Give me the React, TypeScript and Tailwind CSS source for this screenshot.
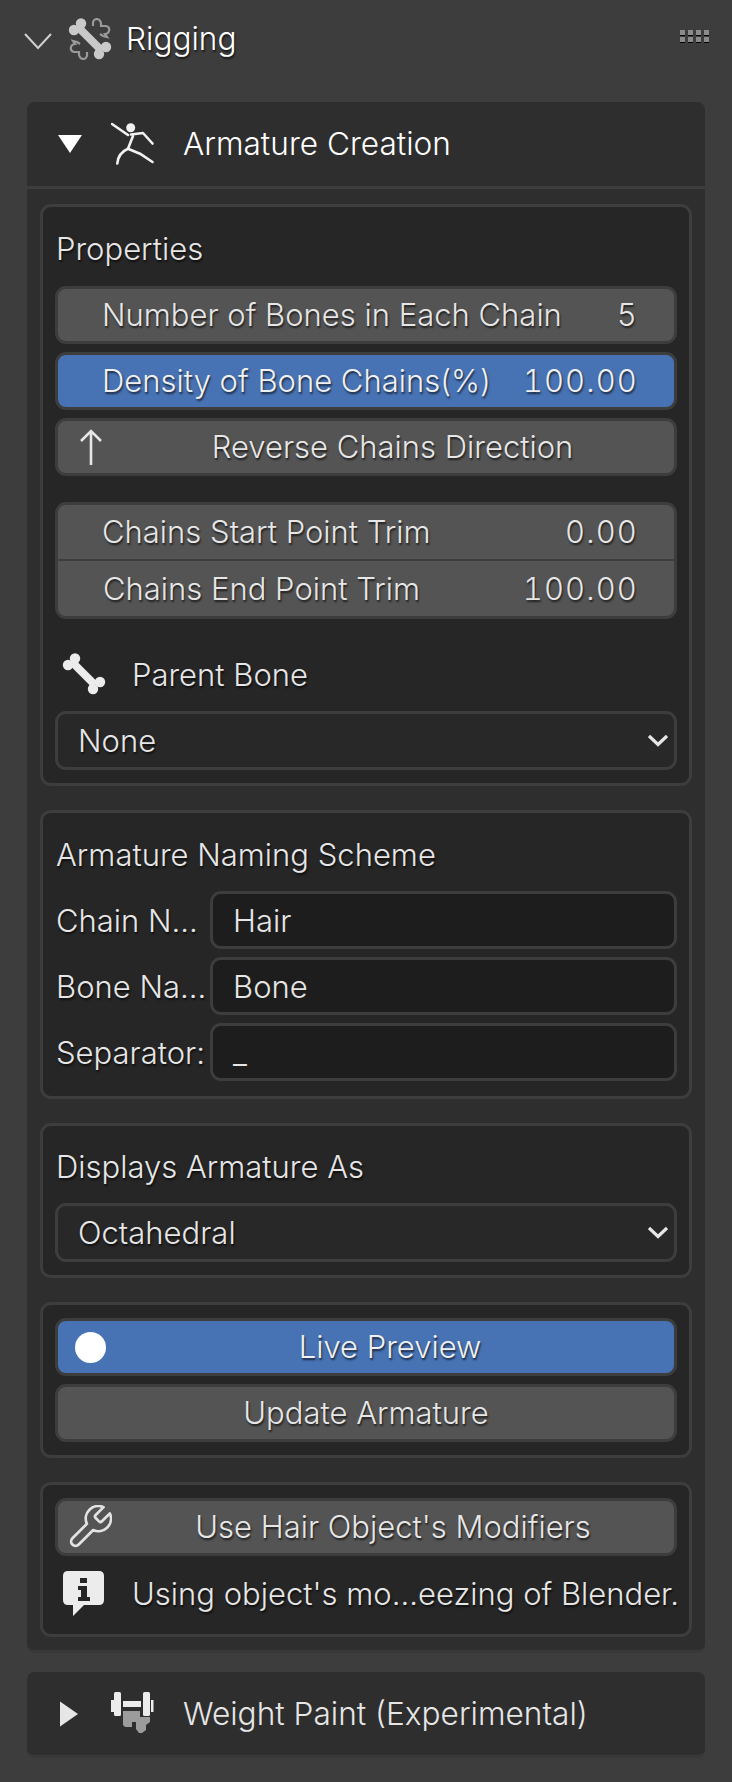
import React from "react";

const shadow = "[text-shadow:1px_2px_2px_rgba(0,0,0,0.65)]";

function Chevron() {
  return (
    <svg width="20" height="14" viewBox="0 0 20 14" className="shrink-0">
      <path d="M1 2 L10 10.5 L19 2" fill="none" stroke="#e6e6e6" strokeWidth="3.2" />
    </svg>
  );
}

function Box({ children, className = "" }: { children: React.ReactNode; className?: string }) {
  return (
    <div className={`rounded-[11px] border-[3px] border-[#3d3d3d] bg-[#262626] px-[12px] ${className}`}>{children}</div>
  );
}

function Label({ children, className = "" }: { children: React.ReactNode; className?: string }) {
  return <div className={`text-[31px] leading-[36px] text-[#e6e6e6] ${shadow} ${className}`}>{children}</div>;
}

function Field({ label, value, blue, className = "" }: { label: string; value: string; blue?: boolean; className?: string }) {
  return (
    <div
      className={`flex h-[58px] items-center justify-between rounded-[11px] border-[3px] border-[#3d3d3d] pl-[44px] pr-[36px] text-[31px] ${shadow} ${
        blue ? "bg-[#4772b3] text-[#f0f0f0]" : "bg-[#545454] text-[#e6e6e6]"
      } ${className}`}
    >
      <span>{label}</span>
      <span className="tabular-nums tracking-[1.1px]">{value}</span>
    </div>
  );
}

function Select({ value }: { value: string }) {
  return (
    <div className={`flex h-[59px] items-center justify-between rounded-[11px] border-[3px] border-[#3d3d3d] bg-[#282828] pl-[20px] pr-[6px] text-[31px] text-[#e6e6e6] ${shadow}`}>
      <span className="pt-[2px]">{value}</span>
      <Chevron />
    </div>
  );
}

function TextRow({ label, value }: { label: string; value: string }) {
  return (
    <div className="flex h-[58px] items-center">
      <div className={`w-[155px] shrink-0 whitespace-nowrap pl-[1px] pt-[2px] text-[31px] text-[#e6e6e6] ${shadow}`}>{label}</div>
      <div className="flex h-[58px] flex-1 items-center rounded-[11px] border-[3px] border-[#3d3d3d] bg-[#1d1d1d] pl-[20px] pt-[2px] text-[31px] text-[#e6e6e6]">
        {value}
      </div>
    </div>
  );
}

function BoneIcon() {
  return (
    <svg width="44" height="42" viewBox="0 0 44 42" className="shrink-0">
      <path d="M11 10 L33 32" stroke="#ececec" strokeWidth="8" />
      <circle cx="6" cy="12" r="5.2" fill="#ececec" />
      <circle cx="13" cy="5.5" r="5.2" fill="#ececec" />
      <circle cx="31" cy="36" r="5.2" fill="#ececec" />
      <circle cx="38" cy="29" r="5.2" fill="#ececec" />
    </svg>
  );
}

function RigIcon() {
  return (
    <svg width="44" height="42" viewBox="0 0 44 42" className="shrink-0">
      <path d="M11 10 L33 32" stroke="#c9c9c9" strokeWidth="8" />
      <circle cx="6" cy="12" r="5.2" fill="#c9c9c9" />
      <circle cx="13" cy="5.5" r="5.2" fill="#c9c9c9" />
      <circle cx="31" cy="36" r="5.2" fill="#c9c9c9" />
      <circle cx="38" cy="29" r="5.2" fill="#c9c9c9" />
      <path d="M25 8 V4 Q26 1 29 1 Q33 2 33 6 V8 H38 Q42 9 41 13 Q40 16 37 16 L39 19 L35 18 L32 16" fill="none" stroke="#9a9a9a" strokeWidth="2.2" />
      <path d="M19 34 V38 Q18 41 15 41 Q11 40 11 36 V34 H6 Q2 33 3 29 Q4 26 7 26 L5 23 L9 24 L12 26" fill="none" stroke="#9a9a9a" strokeWidth="2.2" />
    </svg>
  );
}

function RunIcon() {
  return (
    <svg width="44" height="44" viewBox="0 0 44 44" className="shrink-0">
      <circle cx="19.7" cy="5.7" r="4.5" fill="#f2f2f2" />
      <g fill="none" stroke="#f2f2f2" strokeWidth="2.6" strokeLinecap="round" strokeLinejoin="round">
        <path d="M1 2 L17 13" />
        <path d="M20 12.5 L32 11 L41.5 21.5" />
        <path d="M22 14 L17 26.7 L29 31.7 L41.5 40" />
        <path d="M17 26.7 Q7 31 6.3 41.5" />
      </g>
    </svg>
  );
}

function WeightIcon() {
  return (
    <svg width="44" height="44" viewBox="0 0 44 44" className="shrink-0">
      <path d="M12 19 H29 V25 H39 V30 L35 33 V38 L31 41 H28 L25 37 V30 H21 V35 H14 L12 33 Z" fill="#9c9c9c" />
      <g fill="#ececec">
        <rect x="0" y="8" width="3" height="12" />
        <rect x="3" y="0" width="7" height="24" rx="1.5" />
        <rect x="12" y="9" width="18" height="6" />
        <rect x="32" y="0" width="7" height="24" rx="1.5" />
        <rect x="40" y="8" width="2.5" height="12" />
      </g>
    </svg>
  );
}

function WrenchIcon() {
  return (
    <svg width="44" height="44" viewBox="1.5 1.5 21 21" className="shrink-0">
      <path
        d="M14.7 6.3a1 1 0 0 0 0 1.4l1.6 1.6a1 1 0 0 0 1.4 0l3.77-3.77a6 6 0 0 1-7.94 7.94l-6.91 6.91a2.12 2.12 0 0 1-3-3l6.91-6.91a6 6 0 0 1 7.94-7.94l-3.76 3.76z"
        fill="none"
        stroke="#e2e2e2"
        strokeWidth="1.3"
        strokeLinejoin="round"
      />
    </svg>
  );
}

function InfoIcon() {
  return (
    <svg width="44" height="46" viewBox="0 0 44 46" className="shrink-0">
      <path fillRule="evenodd" fill="#ececec" d="M6 0 H37 Q42 0 42 5 V29 Q42 34 37 34 H22 L11 45 L11 34 H6 Q1 34 1 29 V5 Q1 0 6 0 Z M18 7 V12 H25 V7 Z M16 15 V19 H19 V26 H16 V30 H28 V26 H25 V15 Z" />
    </svg>
  );
}

function Grip() {
  return (
    <div className="mb-[5px] grid grid-cols-4 gap-x-[3px] gap-y-[1px]">
      {Array.from({ length: 8 }).map((_, i) => (
        <div key={i} className="h-[6px] w-[5px] border-b-[1px] border-black bg-[#8a8a8a]" />
      ))}
    </div>
  );
}

export default function App() {
  return (
    <div className="h-[1782px] w-[732px] overflow-hidden bg-[#3d3d3d] font-['Inter',sans-serif] [font-weight:350]">
      <div className="flex h-[78px] items-center pl-[24px] pr-[23px]">
        <svg width="28" height="17" viewBox="0 0 28 17" className="mt-[5px] shrink-0">
          <path d="M1 1 L14 15 L27 1" fill="none" stroke="#d0d0d0" strokeWidth="2" />
        </svg>
        <div className="ml-[16px]">
          <RigIcon />
        </div>
        <div className={`ml-[14px] flex-1 text-[31.6px] text-white ${shadow}`}>Rigging</div>
        <Grip />
      </div>

      <div className="mx-[27px] mt-[24px] rounded-[8px] border-b-[3px] border-[#383838] bg-[#2e2e2e] pb-[13px]">
        <div className="flex h-[87px] items-center border-b-[3px] border-[#3d3d3d] pl-[30px]">
          <svg width="26" height="20" viewBox="0 0 26 20" className="shrink-0">
            <path d="M1 1 H25 L13 19 Z" fill="#ffffff" />
          </svg>
          <div className="ml-[28px]">
            <RunIcon />
          </div>
          <div className="ml-[28px] text-[31.6px] text-white">Armature Creation</div>
        </div>

        <div className="mx-[13px] mt-[15px] flex flex-col gap-[24px]">
          <Box className="pb-[13px] pt-[24px]">
            <Label className="mb-[19px] pl-[1px]">Properties</Label>
            <div className="flex flex-col gap-[8px]">
              <Field label="Number of Bones in Each Chain" value="5" />
              <Field label="Density of Bone Chains(%)" value="100.00" blue />
              <div className={`flex h-[58px] items-center rounded-[11px] border-[3px] border-[#3d3d3d] bg-[#545454] text-[31px] text-[#e6e6e6] ${shadow}`}>
                <svg width="26" height="38" viewBox="0 0 26 38" className="ml-[20px] shrink-0">
                  <path d="M13 37 V3 M3 13 L13 3 L23 13" fill="none" stroke="#e6e6e6" strokeWidth="2.6" />
                </svg>
                <span className="flex-1 pl-[7px] text-center">Reverse Chains Direction</span>
              </div>
            </div>
            <div className="mt-[26px] flex flex-col">
              <Field label="Chains Start Point Trim" value="0.00" className="h-[59px] rounded-b-none border-b-[2px]" />
              <Field label="Chains End Point Trim" value="100.00" className="rounded-t-none border-t-0 pl-[45px] pt-[1px]" />
            </div>
            <div className="mb-[13px] mt-[31px] flex h-[48px] items-center pl-[7px]">
              <BoneIcon />
              <Label className="ml-[26px] pt-[2px]">Parent Bone</Label>
            </div>
            <Select value="None" />
          </Box>

          <Box className="pb-[15px] pt-[23px]">
            <Label className="mb-[19px] h-[36px] pl-[1px] pt-[1px]">Armature Naming Scheme</Label>
            <div className="flex flex-col gap-[8px]">
              <TextRow label="Chain N..." value="Hair" />
              <TextRow label="Bone Na..." value="Bone" />
              <TextRow label="Separator:" value="_" />
            </div>
          </Box>

          <Box className="pb-[13px] pt-[22px]">
            <Label className="mb-[19px] h-[36px] pl-[1px] pt-[1px]">Displays Armature As</Label>
            <Select value="Octahedral" />
          </Box>

          <Box className="flex flex-col gap-[8px] pb-[13px] pt-[13px]">
            <div className={`flex h-[58px] items-center rounded-[11px] border-[3px] border-[#3d3d3d] bg-[#4772b3] text-[31px] text-[#f0f0f0] ${shadow}`}>
              <div className="ml-[17px] h-[31px] w-[31px] shrink-0 rounded-full bg-white" />
              <span className="flex-1 text-center">Live Preview</span>
            </div>
            <div className={`flex h-[58px] items-center justify-center rounded-[11px] border-[3px] border-[#3d3d3d] bg-[#545454] text-[31px] text-[#e6e6e6] ${shadow}`}>
              Update Armature
            </div>
          </Box>

          <Box className="pb-[11px] pt-[13px]">
            <div className={`flex h-[58px] items-center rounded-[11px] border-[3px] border-[#3d3d3d] bg-[#545454] text-[31px] text-[#e6e6e6] ${shadow}`}>
              <div className="ml-[10px]">
                <WrenchIcon />
              </div>
              <span className="flex-1 text-center">Use Hair Object's Modifiers</span>
            </div>
            <div className="mt-[9px] flex h-[58px] items-center pl-[7px]">
              <InfoIcon />
              <Label className="ml-[26px] whitespace-nowrap">Using object's mo...eezing of Blender.</Label>
            </div>
          </Box>
        </div>
      </div>

      <div className="mx-[27px] mt-[19px] flex h-[86px] items-center rounded-[8px] border-b-[3px] border-[#383838] bg-[#2e2e2e] pl-[33px]">
        <svg width="18" height="26" viewBox="0 0 18 26" className="shrink-0">
          <path d="M0 0.5 V25.5 L18 13 Z" fill="#e6e6e6" />
        </svg>
        <div className="ml-[33px]">
          <WeightIcon />
        </div>
        <div className="ml-[28px] text-[31.6px] text-[#e6e6e6]">Weight Paint (Experimental)</div>
      </div>
    </div>
  );
}
